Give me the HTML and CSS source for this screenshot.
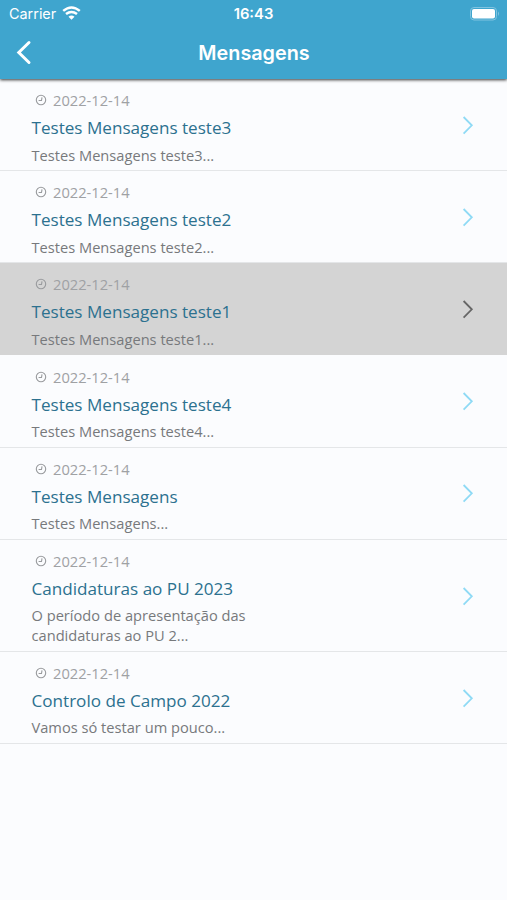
FILE: index.html
```html
<!DOCTYPE html>
<html lang="pt">
<head>
<meta charset="utf-8">
<title>Mensagens</title>
<link rel="stylesheet" href="styles.css">
</head>
<body>
<svg class="defs" width="0" height="0">
  <symbol id="clock" viewBox="0 0 12 12"><circle cx="6" cy="6" r="4.700"/><path d="M7 3.300 6.500 6.500H3.600"/></symbol>
  <symbol id="next" viewBox="0 0 12 20"><path d="M1.600 2 9.800 10.300 1.600 18.600"/></symbol>
</svg>
<header class="header">
  <div class="status">
    <div class="carrier"><span>Carrier</span>
      <svg width="19" height="15" viewBox="0 0 19 15"><path d="M1.200 4.900Q9.500-2 17.800 4.900M4 8.100Q9.500 3.800 15 8.100" fill="none" stroke="#fff" stroke-width="2.500"/><path d="M6.500 10.700Q9.500 8.200 12.500 10.700L9.500 13.700z" fill="#fff"/></svg>
    </div>
    <div class="time">16:43</div>
    <svg class="battery" width="30" height="14" viewBox="0 0 30 14"><rect x=".5" y=".5" width="26" height="12.500" rx="3.500" fill="none" stroke="#80c3df"/><rect x="2" y="2" width="23" height="9.500" rx="2" fill="#fff"/><path d="M28 4.500q2 2.200 0 4.500z" fill="#80c3df"/></svg>
  </div>
  <div class="nav">
    <svg class="back" width="16" height="26" viewBox="0 0 16 26"><path d="M13 2.500 2.800 12.500 13 22.500"/></svg>
    <h1>Mensagens</h1>
  </div>
</header>
<main>
  <article class="item"><div class="body"><div class="date"><svg class="clock"><use href="#clock"/></svg><span>2022-12-14</span></div><h2>Testes Mensagens teste3</h2><p>Testes Mensagens teste3...</p></div><svg class="next"><use href="#next"/></svg></article>
  <article class="item"><div class="body"><div class="date"><svg class="clock"><use href="#clock"/></svg><span>2022-12-14</span></div><h2>Testes Mensagens teste2</h2><p>Testes Mensagens teste2...</p></div><svg class="next"><use href="#next"/></svg></article>
  <article class="item selected"><div class="body"><div class="date"><svg class="clock"><use href="#clock"/></svg><span>2022-12-14</span></div><h2>Testes Mensagens teste1</h2><p>Testes Mensagens teste1...</p></div><svg class="next"><use href="#next"/></svg></article>
  <article class="item"><div class="body"><div class="date"><svg class="clock"><use href="#clock"/></svg><span>2022-12-14</span></div><h2>Testes Mensagens teste4</h2><p>Testes Mensagens teste4...</p></div><svg class="next"><use href="#next"/></svg></article>
  <article class="item"><div class="body"><div class="date"><svg class="clock"><use href="#clock"/></svg><span>2022-12-14</span></div><h2>Testes Mensagens</h2><p>Testes Mensagens...</p></div><svg class="next"><use href="#next"/></svg></article>
  <article class="item"><div class="body"><div class="date"><svg class="clock"><use href="#clock"/></svg><span>2022-12-14</span></div><h2>Candidaturas ao PU 2023</h2><p>O período de apresentação das candidaturas ao PU 2...</p></div><svg class="next"><use href="#next"/></svg></article>
  <article class="item"><div class="body"><div class="date"><svg class="clock"><use href="#clock"/></svg><span>2022-12-14</span></div><h2>Controlo de Campo 2022</h2><p>Vamos só testar um pouco...</p></div><svg class="next"><use href="#next"/></svg></article>
</main>
</body>
</html>
```
FILE: styles.css
```css
* { box-sizing: border-box; }
body { margin: 0; min-height: 900px; background: #fbfcfe; font-family: "Open Sans", sans-serif; }
.defs { display: block; }
.header { height: 79px; background: #3fa5ce; color: #fff; font-family: Inter, sans-serif; box-shadow: 0 1px 3px rgba(0,0,0,.8); }
.status { height: 27px; padding: 0 7px 0 9px; display: grid; grid-template-columns: 1fr auto 1fr; align-items: center; }
.carrier { display: flex; align-items: center; gap: 6px; font-size: 14.4px; }
.time { font-size: 14.8px; font-weight: 600; transform: translateX(-1px); }
.battery { justify-self: end; }
.nav { height: 51px; display: grid; grid-template-columns: 40px 1fr 40px; align-items: center; }
.back { margin-left: 16px; fill: none; stroke: #fff; stroke-width: 3; stroke-linecap: round; }
.nav h1 { margin: 0; padding-left: 1px; text-align: center; font-size: 19.8px; font-weight: 600; line-height: 24px; }
.item { display: flex; align-items: center; justify-content: space-between; padding: 10.2px 33px 5.45px 31.5px; border-bottom: 1px solid #e4e6e8; }
.body { width: 245px; }
.date { display: flex; align-items: center; height: 22px; font-size: 14.7px; color: #9fa1a4; }
.clock { width: 12px; height: 12px; margin: 0 6.500px 0 3px; fill: none; stroke: #999b9e; stroke-width: 1.1; }
.item h2 { margin: 4px 0 3.5px; font-size: 17.1px; font-weight: 400; line-height: 26px; color: #2c718f; white-space: nowrap; }
.item p { margin: 0; font-size: 14.65px; line-height: 20px; color: #77797c; }
.next { width: 12px; height: 20px; margin-bottom: 4px; fill: none; stroke: #8fdaf5; stroke-width: 1.8; }
.selected { background: #d4d4d4; border-color: #d4d4d4; }
.selected .next { stroke: #666; }
```
